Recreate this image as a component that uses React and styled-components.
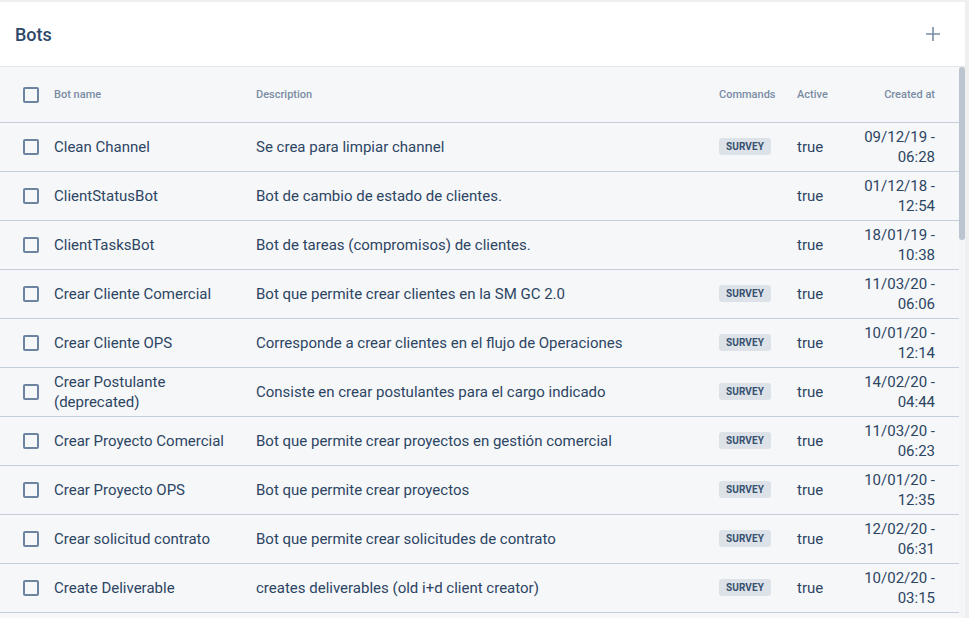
import React from "react";
import styled, { createGlobalStyle } from "styled-components";

const GlobalStyle = createGlobalStyle`
  html, body {
    margin: 0;
    padding: 0;
    height: 100%;
    overflow: hidden;
    background: #efefef;
    font-family: Roboto, "Liberation Sans", sans-serif;
  }
  #root {
    height: 100%;
  }
`;

const Panel = styled.div`
  display: flex;
  flex-direction: column;
  height: calc(100vh - 2px);
  margin: 2px 4px 0 0;
  background: #f6f7f9;
`;

const Header = styled.div`
  display: flex;
  align-items: center;
  justify-content: space-between;
  height: 64px;
  padding: 0 20px 0 15px;
  background: #fff;
  border-bottom: 1px solid #e3e7ec;
  flex-shrink: 0;
`;

const Title = styled.h1`
  margin: 0;
  font-size: 18px;
  font-weight: 500;
  color: #2d4869;
`;

const AddButton = styled.button`
  display: flex;
  align-items: center;
  justify-content: center;
  width: 24px;
  height: 24px;
  padding: 0;
  border: none;
  background: transparent;
  cursor: pointer;
`;

const Body = styled.div`
  flex: 1;
  display: flex;
  min-height: 0;
`;

const Table = styled.div`
  flex: 1;
  overflow: hidden;
`;

const ScrollTrack = styled.div`
  width: 6px;
  flex-shrink: 0;
  background: #f3f5f7;
`;

const Thumb = styled.div`
  height: 173px;
  border-radius: 3px;
  background: #bcc5cf;
`;

const Row = styled.div`
  display: grid;
  grid-template-columns: 31px 202px 463px 78px 1fr 80px;
  align-items: center;
  padding: 0 24px 0 23px;
  height: ${({ $head }) => ($head ? "55px" : "48px")};
  border-bottom: 1px solid #c4cedb;
`;

const HeadCell = styled.div`
  font-size: 11px;
  font-weight: 500;
  color: #7a8da4;
  text-align: ${({ $right }) => ($right ? "right" : "left")};
`;

const Cell = styled.div`
  font-size: 15px;
  line-height: 20px;
  color: #2c4563;
  text-align: ${({ $right }) => ($right ? "right" : "left")};
  padding-right: ${({ $pad }) => ($pad ? "10px" : "0")};
`;

const Check = styled.span`
  display: block;
  width: 12px;
  height: 12px;
  border: 2px solid #6c84a0;
  border-radius: 2px;
`;

const Badge = styled.span`
  display: inline-block;
  padding: 0 7px;
  height: 17px;
  line-height: 17px;
  margin-top: 1px;
  border-radius: 3px;
  background: #dde2e9;
  color: #36506f;
  font-size: 10px;
  font-weight: 700;
  letter-spacing: 0.1px;
  vertical-align: top;
`;

const bots = [
  ["Clean Channel", "Se crea para limpiar channel", true, "09/12/19 - 06:28"],
  ["ClientStatusBot", "Bot de cambio de estado de clientes.", false, "01/12/18 - 12:54"],
  ["ClientTasksBot", "Bot de tareas (compromisos) de clientes.", false, "18/01/19 - 10:38"],
  ["Crear Cliente Comercial", "Bot que permite crear clientes en la SM GC 2.0", true, "11/03/20 - 06:06"],
  ["Crear Cliente OPS", "Corresponde a crear clientes en el flujo de Operaciones", true, "10/01/20 - 12:14"],
  ["Crear Postulante (deprecated)", "Consiste en crear postulantes para el cargo indicado", true, "14/02/20 - 04:44"],
  ["Crear Proyecto Comercial", "Bot que permite crear proyectos en gestión comercial", true, "11/03/20 - 06:23"],
  ["Crear Proyecto OPS", "Bot que permite crear proyectos", true, "10/01/20 - 12:35"],
  ["Crear solicitud contrato", "Bot que permite crear solicitudes de contrato", true, "12/02/20 - 06:31"],
  ["Create Deliverable", "creates deliverables (old i+d client creator)", true, "10/02/20 - 03:15"],
];

function PlusIcon() {
  return (
    <svg width="16" height="16" viewBox="0 0 16 16" fill="none">
      <path d="M8 1v14M1 8h14" stroke="#7a8ea5" strokeWidth="1.6" />
    </svg>
  );
}

export default function App() {
  return (
    <>
      <GlobalStyle />
      <Panel>
        <Header>
          <Title>Bots</Title>
          <AddButton>
            <PlusIcon />
          </AddButton>
        </Header>
        <Body>
          <Table>
            <Row $head>
              <Check />
              <HeadCell>Bot name</HeadCell>
              <HeadCell>Description</HeadCell>
              <HeadCell>Commands</HeadCell>
              <HeadCell>Active</HeadCell>
              <HeadCell $right>Created at</HeadCell>
            </Row>
            {bots.map(([name, desc, survey, created]) => (
              <Row key={name}>
                <Check />
                <Cell $pad>{name}</Cell>
                <Cell>{desc}</Cell>
                <Cell>{survey && <Badge>SURVEY</Badge>}</Cell>
                <Cell>true</Cell>
                <Cell $right>{created}</Cell>
              </Row>
            ))}
          </Table>
          <ScrollTrack>
            <Thumb />
          </ScrollTrack>
        </Body>
      </Panel>
    </>
  );
}
